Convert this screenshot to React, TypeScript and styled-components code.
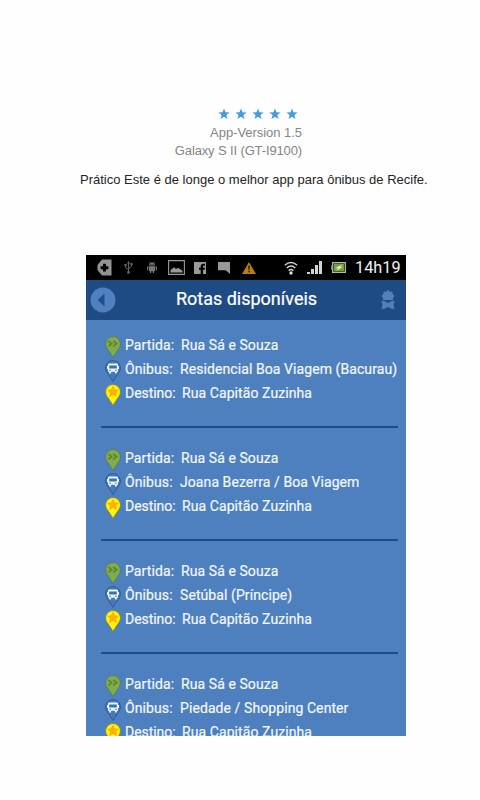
import React from "react";
import styled, { createGlobalStyle } from "styled-components";

const GlobalStyle = createGlobalStyle`
  * { box-sizing: border-box; }
  body { margin: 0; background: #fefefe; }
  svg { flex: none; }
`;

const Page = styled.main`
  width: 480px;
  height: 800px;
  overflow: hidden;
  display: flex;
  flex-direction: column;
  background: #fefefe;
`;

const Review = styled.section`
  height: 255px;
  flex: none;
  padding-top: 105px;
  display: flex;
  flex-direction: column;
  font-family: "Liberation Sans", Arial, sans-serif;
`;

const Meta = styled.div`
  width: 302px;
  display: flex;
  flex-direction: column;
  align-items: flex-end;
  color: #858585;
  font-size: 13px;
  line-height: 18px;
  white-space: nowrap;
`;

const Stars = styled.div`
  display: flex;
  gap: 5px;
  height: 19px;
  align-items: center;
  padding-right: 4px;
  padding-bottom: 1px;
`;

const MetaLine = styled.span<{ $track: number }>`
  letter-spacing: ${(p) => p.$track}px;
`;

const Comment = styled.p`
  margin: 11px 0 0 80px;
  color: #242424;
  font-size: 13px;
  line-height: 18px;
  white-space: nowrap;
`;

const Phone = styled.section`
  width: 320px;
  height: 481px;
  margin-left: 86px;
  overflow: hidden;
  display: flex;
  flex-direction: column;
  flex: none;
  background: #4e80bf;
  color: #f3f7fc;
  font-family: Roboto, sans-serif;
`;

const StatusBar = styled.div`
  height: 25px;
  flex: none;
  display: flex;
  align-items: center;
  background: #000;
`;

const Slot = styled.span<{ $w: number }>`
  width: ${(p) => p.$w}px;
  height: 25px;
  flex: none;
  display: flex;
  align-items: center;
  justify-content: center;
`;

const SystemGroup = styled.div`
  display: flex;
  align-items: center;
  gap: 9px;
  margin-left: 17px;
`;

const Clock = styled.span`
  margin-left: 9px;
  font-size: 16.3px;
  line-height: 25px;
  color: #f2f2f2;
`;

const Header = styled.header`
  height: 40px;
  flex: none;
  display: flex;
  align-items: center;
  justify-content: space-between;
  padding: 0 11px 0 4px;
  background: #1f4b84;
`;

const Title = styled.h1`
  margin: 0 4px 2px 0;
  font-size: 18px;
  line-height: 24px;
  font-weight: 400;
  color: #fff;
  -webkit-text-stroke: 0.2px #fff;
`;

const Routes = styled.div`
  padding: 13px 8px 0 15px;
`;

const Route = styled.article`
  height: 95px;
  margin-bottom: 18px;
  border-bottom: 2px solid #1d4c89;
`;

const Line = styled.div`
  height: 24px;
  display: flex;
  align-items: center;
  padding-left: 4px;
  font-size: 14px;
  white-space: nowrap;
  -webkit-text-stroke: 0.2px #f3f7fc;
`;

const Label = styled.span<{ $w: number; $track?: number }>`
  width: ${(p) => p.$w}px;
  margin-left: 4px;
  flex: none;
  letter-spacing: ${(p) => p.$track ?? 0.1}px;
`;

const Value = styled.span`
  letter-spacing: 0.08px;
`;

const PinSvg = styled.svg`
  margin-top: 3px;
`;

const PIN = "M8 .6C3.9.6.6 3.9.6 8c0 2.5 1.2 4.3 2.8 6.3L8 21.4l4.6-7.1C14.2 12.3 15.4 10.5 15.4 8 15.4 3.9 12.1.6 8 .6Z";

type Kind = "start" | "bus" | "end";

const Pin = ({ kind }: { kind: Kind }) => (
  <PinSvg width="16" height="22" viewBox="0 0 16 22">
    <path
      d={PIN}
      fill={kind === "start" ? "#82ab4c" : kind === "bus" ? "#4379b9" : "#fff500"}
      stroke={kind === "end" ? "#7f8845" : kind === "bus" ? "#2b5896" : "#537e60"}
      strokeWidth=".9"
    />
    {kind === "start" && (
      <path d="m3.4 5 3.2 2.7-3.2 2.7M8.2 5l3.4 2.7-3.4 2.7" fill="none" stroke="#5c852f" strokeWidth="1.7" />
    )}
    {kind === "bus" && (
      <>
        <path d="M3.8 3.6h8.4l.8 1v7.2h-1.2v1.6H9.9v-1.6H6.1v1.6H4.2v-1.6H3V4.6ZM2 6.1h1v3H2Zm11 0h1v3h-1Z" fill="#edf4fc" />
        <path d="M4.2 5.4h7.6v3H4.2ZM4.3 9.7h1.6v1.1H4.3Zm5.8 0h1.6v1.1h-1.6Z" fill="#3970b0" />
      </>
    )}
    {kind === "end" && (
      <path d="m8 2.4 1.6 3.4 3.6.4-2.7 2.5.8 3.7L8 10.5l-3.3 1.9.8-3.7-2.7-2.5 3.6-.4Z" fill="#ffb300" stroke="#f39b13" strokeWidth=".6" />
    )}
  </PinSvg>
);

const Star = () => (
  <svg width="12" height="12" viewBox="0 0 12 12">
    <path d="m6 .4 1.5 3.9 4.1.2-3.2 2.6 1.1 4L6 8.8l-3.5 2.3 1.1-4L.4 4.5l4.1-.2Z" fill="#459cd7" />
  </svg>
);

const NotificationIcons = () => (
  <>
    <Slot $w={37}>
      <svg width="15" height="17" viewBox="0 0 15 17">
        <path d="M5 .5h9.5v16H5L.5 11V6Z" fill="#939393" />
        <path d="M6 4.8h3v2.4h2.4v3H9v2.4H6v-2.4H3.6v-3H6Z" fill="#000" />
      </svg>
    </Slot>
    <Slot $w={10}>
      <svg width="9" height="13" viewBox="0 0 9 13">
        <path d="M4.5 1v10M1.5 4v2.5l3 2M7.5 3v2.5l-3 2" fill="none" stroke="#656565" />
        <path d="m4.5 0 1.6 2.4H2.9ZM3.2 10.3h2.6v2.4H3.2ZM.4 3h2.2v2H.4Zm6-1h2.2v2H6.4Z" fill="#656565" />
      </svg>
    </Slot>
    <Slot $w={38}>
      <svg width="10" height="13" viewBox="0 0 10 13">
        <path d="M2 4.5a3 3 0 0 1 6 0ZM2 5.2h6v5H7V12H5.8v-1.8H4.2V12H3v-1.8H2ZM.1 5.2h1.2v4H.1Zm8.6 0h1.2v4H8.7Z" fill="#777" />
        <path d="m2.3.7 1.2 1.8M7.7.7 6.5 2.5" stroke="#777" strokeWidth=".7" />
        <path d="M3.5 3h.8v.8h-.8Zm2.2 0h.8v.8h-.8Z" fill="#000" />
      </svg>
    </Slot>
    <Slot $w={11}>
      <svg width="17" height="15" viewBox="0 0 17 15">
        <path d="M.6.6h15.8v13.8H.6Z" fill="none" stroke="#999" strokeWidth="1.1" />
        <path d="M2.5 12.5v-2.2L6 7.2l2 1.9 2-1.3 4.5 3v1.7Z" fill="#999" />
      </svg>
    </Slot>
    <Slot $w={36}>
      <svg width="12" height="12" viewBox="0 0 12 12">
        <path d="M0 0h12v12H0Z" fill="#999" />
        <path d="M11 1.8H9.3q-2.6 0-2.6 2.7v1.3H5v1.9h1.7V12H9V7.7h1.8l.2-1.9H9V4.4q0-.7.8-.7H11Z" fill="#000" />
      </svg>
    </Slot>
    <Slot $w={12}>
      <svg width="12" height="12" viewBox="0 0 12 12">
        <path d="M0 0h12v12L7.8 8.3H0Z" fill="#999" />
      </svg>
    </Slot>
    <Slot $w={37}>
      <svg width="14" height="12" viewBox="0 0 14 12">
        <path d="M7 0 14 12H0Z" fill="#b77f10" />
        <path d="M6.2 3.8h1.6l-.3 4h-1Zm.1 5h1.4v1.4H6.3Z" fill="#150f00" />
      </svg>
    </Slot>
  </>
);

const SystemIcons = () => (
  <SystemGroup>
    <svg width="14" height="14" viewBox="0 0 14 14">
      <path d="M.8 4.2q6.2-5.4 12.4 0M2.7 7q4.3-4 8.6 0M4.7 9.6q2.3-2.1 4.6 0" fill="none" stroke="#d0d0d0" strokeWidth="1.5" />
      <circle cx="7" cy="12" r="1.7" fill="#ddd" />
    </svg>
    <svg width="15" height="13" viewBox="0 0 15 13">
      <path d="M0 11h3v2H0Zm4-3h3v5H4Zm4-4h3v9H8Zm4-4h3v13h-3Z" fill="#d4d4d4" />
    </svg>
    <svg width="15" height="11" viewBox="0 0 15 11">
      <path d="M1.6.6h12.8v9.8H1.6Z" fill="#26351a" stroke="#b6bda8" strokeWidth="1.1" />
      <path d="M0 3.2h1.2v4.6H0Z" fill="#77836b" />
      <path d="M3 2h10v7H3Z" fill="#72a23a" />
      <path d="m12 2-8 4.2h3L5 9l7-4.3H9Z" fill="#e5edc8" />
    </svg>
  </SystemGroup>
);

const BackIcon = () => (
  <svg width="26" height="26" viewBox="0 0 26 26">
    <circle cx="13" cy="13" r="12.5" fill="#5080bf" />
    <path d="M14.5 6.5v13L7.5 13Z" fill="#20508b" />
  </svg>
);

const AwardIcon = () => (
  <svg width="14" height="22" viewBox="0 0 14 22">
    <path d="m7 .8 1.6 2 2.8-.4.3 2.8 1.9 1.9-1.7 1.8.2 2.2H1.9l.2-2.2L.4 7.1l1.9-1.9.3-2.8 2.8.4Z" fill="#5180bd" />
    <path d="M.4 11.9h3L7 14l3.6-2.1h3L12.4 16l1.2 4.2-3.8-.7L7 17.8l-2.8 1.7-3.8.7L1.6 16Z" fill="#5180bd" />
    <path d="M2.9 11.5q2.5-.2 4.1 1.8 1.6-2 4.1-1.8" fill="none" stroke="#1f4b84" strokeWidth=".8" />
  </svg>
);

const buses = [
  "Residencial Boa Viagem (Bacurau)",
  "Joana Bezerra / Boa Viagem",
  "Setúbal (Príncipe)",
  "Piedade / Shopping Center",
];

const RouteItem = ({ bus }: { bus: string }) => (
  <Route>
    <Line><Pin kind="start" /><Label $w={56}>Partida:</Label><Value>Rua Sá e Souza</Value></Line>
    <Line><Pin kind="bus" /><Label $w={55}>Ônibus:</Label><Value>{bus}</Value></Line>
    <Line><Pin kind="end" /><Label $w={57} $track={-0.05}>Destino:</Label><Value>Rua Capitão Zuzinha</Value></Line>
  </Route>
);

export default function App() {
  return (
    <Page>
      <GlobalStyle />
      <Review>
        <Meta>
          <Stars>{[1, 2, 3, 4, 5].map((n) => <Star key={n} />)}</Stars>
          <MetaLine $track={-0.04}>App-Version 1.5</MetaLine>
          <MetaLine $track={-0.13}>Galaxy S II (GT-I9100)</MetaLine>
        </Meta>
        <Comment>Prático Este é de longe o melhor app para ônibus de Recife.</Comment>
      </Review>
      <Phone>
        <StatusBar>
          <NotificationIcons />
          <SystemIcons />
          <Clock>14h19</Clock>
        </StatusBar>
        <Header><BackIcon /><Title>Rotas disponíveis</Title><AwardIcon /></Header>
        <Routes>{buses.map((bus) => <RouteItem key={bus} bus={bus} />)}</Routes>
      </Phone>
    </Page>
  );
}
